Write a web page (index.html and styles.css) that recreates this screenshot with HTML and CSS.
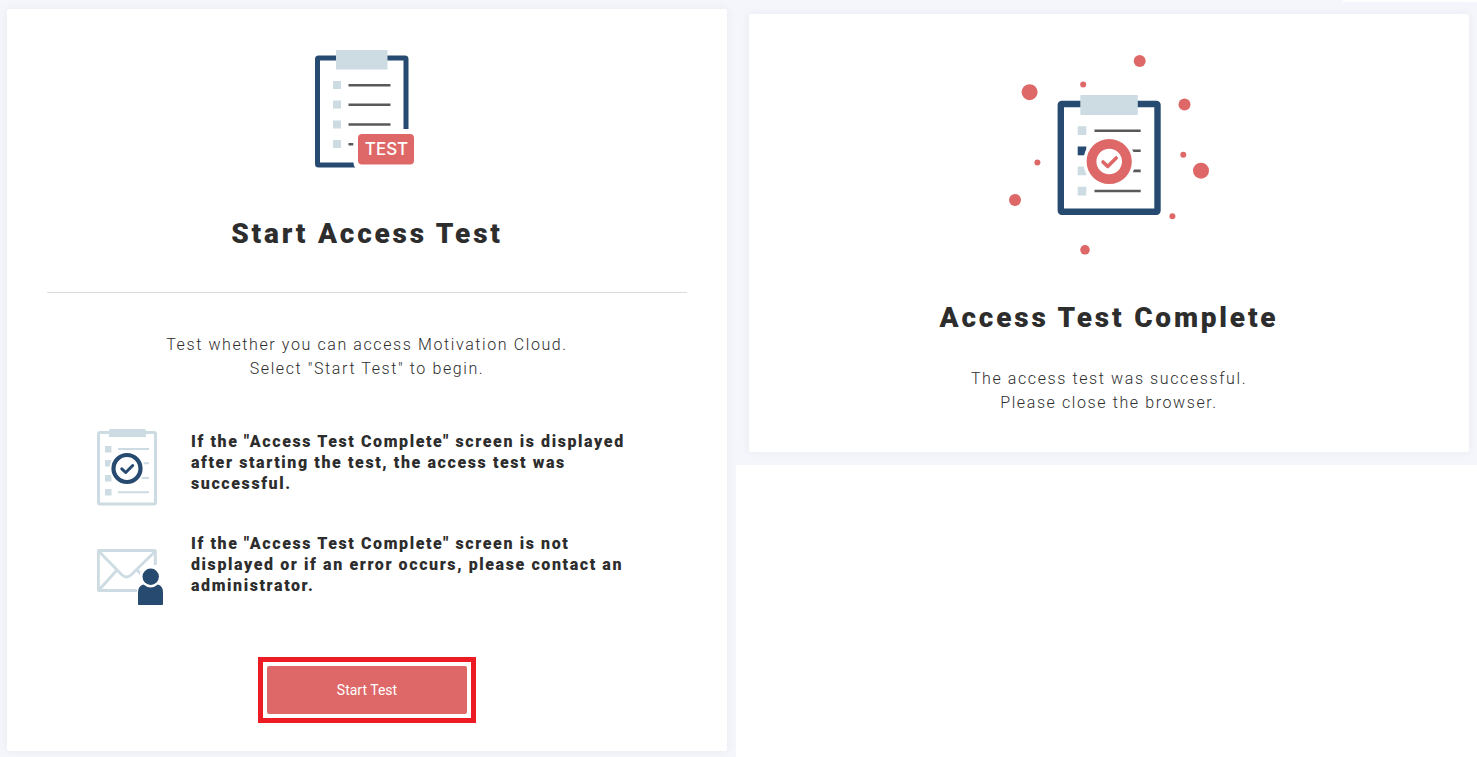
FILE: index.html
```html
<!DOCTYPE html>
<html lang="en">
<head>
<meta charset="utf-8">
<meta name="viewport" content="width=device-width, initial-scale=1">
<title>Access Test</title>
<link rel="stylesheet" href="styles.css">
</head>
<body>
<main class="screens">
  <section class="pane pane-start">
    <div class="card">
      <svg class="art-start" viewBox="307 49 120 120" aria-hidden="true">
        <rect x="317.500" y="58" width="88.500" height="107" rx="1" fill="#fff" stroke="#264a70" stroke-width="5" stroke-linejoin="round"/>
        <rect x="336" y="50" width="51.500" height="19.500" fill="#cddbe2"/>
        <path fill="#cddbe2" d="M333 81h8v8h-8zM333 100.500h8v8h-8zM333 120.500h8v8h-8zM333 140h8v8h-8z"/>
        <path stroke="#595959" stroke-width="2.600" d="M348.500 85.300h42M348.500 104.800h42M348.500 124.500h42M348.500 144.200h5"/>
        <rect x="353.500" y="129" width="66" height="41" rx="7" fill="#fff"/>
        <rect x="358" y="134" width="56" height="30.500" rx="4" fill="#de6868"/>
        <text class="badge-text" x="386.500" y="155" text-anchor="middle">TEST</text>
      </svg>
      <h1 class="title">Start Access Test</h1>
      <hr class="rule">
      <p class="lead">Test whether you can access Motivation Cloud.<br>Select "Start Test" to begin.</p>
      <ul class="notes">
        <li class="note">
          <svg class="note-icon icon-sheet" viewBox="97 429 66 78" aria-hidden="true">
            <rect x="98.500" y="432.500" width="57" height="71.500" rx="1.500" fill="#fff" stroke="#cddbe2" stroke-width="3"/>
            <path fill="#cddbe2" d="M110 429h35l1 1v7h-37v-7zM105 446h6.500v6.500H105zM105 460h6.500v6.500H105zM105 475h6.500v6.500H105zM105 489h6.500v6.500H105z"/>
            <path stroke="#cddbe2" stroke-width="2" d="M118 449h31M118 463.300h31M118 478h31M118 492.300h31"/>
            <circle cx="127" cy="468.500" r="17.500" fill="#fff"/>
            <circle cx="127" cy="468.500" r="13.500" fill="#fff" stroke="#264a70" stroke-width="4.200"/>
            <path d="M121.800 468.800l3.900 3.700 7-7" fill="none" stroke="#264a70" stroke-width="3" stroke-linecap="round" stroke-linejoin="round"/>
          </svg>
          <p class="note-text">If the "Access Test Complete" screen is displayed after starting the test, the access test was successful.</p>
        </li>
        <li class="note">
          <svg class="note-icon icon-mail" viewBox="97 549 66 56" aria-hidden="true">
            <rect x="98.300" y="550.500" width="57" height="40" rx="1" fill="#fff" stroke="#cddbe2" stroke-width="3"/>
            <path d="M98.500 551l23.500 24q4.500 4 9 0L155.500 551M98.500 590.500l18-20M155.500 590.500l-18-20" fill="none" stroke="#cddbe2" stroke-width="2.800"/>
            <path d="M137 607v-18q0-6 5-8 -3-4-2-8 3-8 13-8h12v42z" fill="#fff"/>
            <circle cx="150.700" cy="576.800" r="8.200" fill="#264a70"/>
            <path d="M138.700 605q-.7 0-.7-1v-12q0-6 5.500-7.500 3.500 3 7.200 3t7.200-3q5.100 1.500 5.100 7.500v12q0 1-.7 1z" fill="#264a70"/>
          </svg>
          <p class="note-text">If the "Access Test Complete" screen is not displayed or if an error occurs, please contact an administrator.</p>
        </li>
      </ul>
      <div class="highlight"><button class="start-button" type="button">Start Test</button></div>
    </div>
  </section>

  <section class="pane pane-complete">
    <div class="card">
      <svg class="art-complete" viewBox="1009 54 200 202" aria-hidden="true">
        <g fill="#de6868">
          <circle cx="1029.600" cy="92.200" r="8"/><circle cx="1083.200" cy="84.500" r="3"/>
          <circle cx="1139.700" cy="61" r="6"/><circle cx="1184.500" cy="104.500" r="6"/>
          <circle cx="1183.300" cy="154.700" r="3"/><circle cx="1201" cy="170.700" r="8"/>
          <circle cx="1172.400" cy="216.200" r="3"/><circle cx="1085" cy="249.800" r="4.800"/>
          <circle cx="1015" cy="200" r="6"/><circle cx="1037.400" cy="162.500" r="3"/>
        </g>
        <rect x="1060.800" y="104" width="96.700" height="107.800" rx="1" fill="#fff" stroke="#264a70" stroke-width="6.400" stroke-linejoin="round"/>
        <rect x="1080.300" y="95" width="57.500" height="20" rx="1" fill="#cddbe2"/>
        <path fill="#cddbe2" d="M1077.700 126.200h8.600v8.800h-8.600zM1077.700 166.500h8.600v8.800h-8.600zM1077.700 186.700h8.600v8.800h-8.600z"/>
        <path fill="#264a70" d="M1077.700 146.500h8.600v8.800h-8.600z"/>
        <path stroke="#595959" stroke-width="2.600" d="M1094.500 130.800h46.200M1094.500 150.800h46.200M1094.500 170.900h46.200M1094.500 191h46.200"/>
        <circle cx="1109.200" cy="161.500" r="26" fill="#fff"/>
        <circle cx="1109.200" cy="161.500" r="17.700" fill="#fff" stroke="#de6868" stroke-width="9.800"/>
        <path d="M1103 162l4.700 4.400 8.500-8.500" fill="none" stroke="#de6868" stroke-width="3.600" stroke-linecap="round" stroke-linejoin="round"/>
      </svg>
      <h1 class="title">Access Test Complete</h1>
      <p class="lead">The access test was successful.<br>Please close the browser.</p>
    </div>
  </section>
</main>
</body>
</html>
```
FILE: styles.css
```css
* {
  box-sizing: border-box;
}

body {
  margin: 0;
  background: #fff;
  color: #2d2d2d;
  font-family: Roboto, "Liberation Sans", sans-serif;
}

.screens {
  display: grid;
  grid-template-columns: 736fr 741fr;
  align-items: start;
  min-height: 100vh;
}

.pane {
  position: relative;
  background: #f5f6fb;
}

.pane-start {
  align-self: stretch;
  padding: 9px 9px 6px 7px;
}

.pane-complete {
  padding: 14px 8px 13px 13px;
}

.pane-complete::before {
  content: "";
  position: absolute;
  top: 0;
  right: 0;
  width: 134px;
  height: 2px;
  background: #fff;
}

.card {
  display: flex;
  flex-direction: column;
  align-items: center;
  padding: 40px 40px 28px;
  border-radius: 2px;
  background: #fff;
  box-shadow: 0 0 10px rgba(40, 50, 80, 0.06);
}

.pane-complete .card {
  padding-bottom: 37px;
}

.art-start {
  width: 120px;
  height: 120px;
}

.art-complete {
  width: 200px;
  height: 202px;
}

.badge-text {
  fill: #fff;
  font-family: Inter, sans-serif;
  font-size: 17px;
  font-weight: 500;
}

.title {
  margin: 45px 0 0;
  font-size: 28px;
  font-weight: 900;
  line-height: 40px;
  letter-spacing: 0.1em;
  text-align: center;
}

.rule {
  width: 100%;
  margin: 38px 0 40px;
  border: 0;
  border-top: 1px solid #dcdcdc;
}

.lead {
  margin: 0;
  font-size: 16px;
  font-weight: 300;
  line-height: 24px;
  letter-spacing: 0.1em;
  text-align: center;
}

.pane-complete .title {
  margin-top: 42px;
}

.pane-complete .lead {
  margin-top: 29px;
}

.notes {
  display: flex;
  flex-direction: column;
  gap: 39px;
  width: 100%;
  max-width: 540px;
  margin: 50px 0 0;
  padding: 0;
  list-style: none;
}

.note {
  display: flex;
  align-items: flex-start;
  gap: 28px;
}

.note-icon {
  flex: none;
  width: 66px;
}

.icon-sheet {
  height: 78px;
  margin: -2px 0 -13px;
}

.icon-mail {
  height: 56px;
  margin: 16px 0 -9px;
}

.note-text {
  margin: 0;
  font-size: 16px;
  font-weight: 900;
  line-height: 21px;
  letter-spacing: 0.1em;
}

.highlight {
  margin-top: 61px;
  padding: 4px;
  border: 5px solid #ed1c24;
}

.start-button {
  display: block;
  width: 200px;
  height: 48px;
  border: 0;
  border-radius: 2px;
  background: #de6868;
  color: #fff;
  font: 400 14px Roboto, "Liberation Sans", sans-serif;
  cursor: pointer;
}
```
